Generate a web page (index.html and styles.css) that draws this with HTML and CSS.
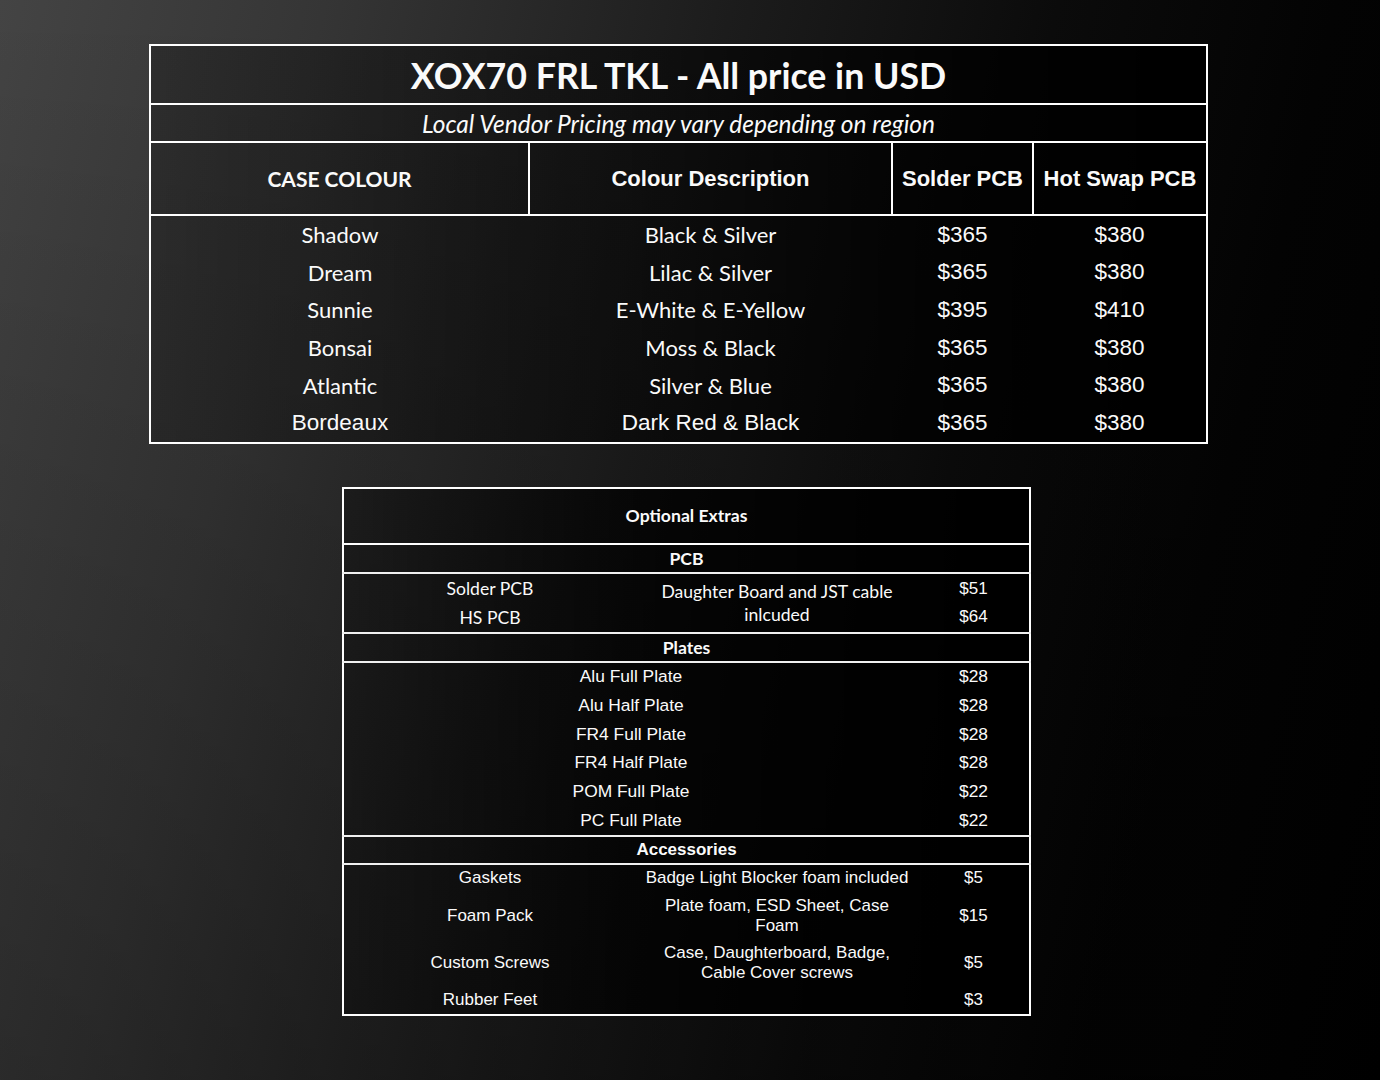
FILE: index.html
```html
<!DOCTYPE html>
<html lang="en">
<head>
<meta charset="utf-8">
<title>XOX70 FRL TKL Pricing</title>
<link rel="stylesheet" href="styles.css">
</head>
<body>
<table class="price">
  <colgroup>
    <col class="w1"><col class="w2"><col class="w3"><col class="w4">
  </colgroup>
  <tr class="title-row"><td colspan="4" class="title cal">XOX70 FRL TKL - All price in USD</td></tr>
  <tr class="sub-row"><td colspan="4" class="subtitle cal">Local Vendor Pricing may vary depending on region</td></tr>
  <tr class="head-row">
    <th class="cal">CASE COLOUR</th>
    <th class="ari">Colour Description</th>
    <th class="ari">Solder PCB</th>
    <th class="ari">Hot Swap PCB</th>
  </tr>
  <tr class="body-row"><td class="cal">Shadow</td><td class="cal">Black &amp; Silver</td><td class="ari">$365</td><td class="ari">$380</td></tr>
  <tr class="body-row"><td class="cal">Dream</td><td class="cal">Lilac &amp; Silver</td><td class="ari">$365</td><td class="ari">$380</td></tr>
  <tr class="body-row"><td class="cal">Sunnie</td><td class="cal">E-White &amp; E-Yellow</td><td class="ari">$395</td><td class="ari">$410</td></tr>
  <tr class="body-row"><td class="cal">Bonsai</td><td class="cal">Moss &amp; Black</td><td class="ari">$365</td><td class="ari">$380</td></tr>
  <tr class="body-row"><td class="cal">Atlantic</td><td class="cal">Silver &amp; Blue</td><td class="ari">$365</td><td class="ari">$380</td></tr>
  <tr class="body-row"><td class="ari">Bordeaux</td><td class="ari">Dark Red &amp; Black</td><td class="ari">$365</td><td class="ari">$380</td></tr>
</table>

<table class="extras">
  <colgroup>
    <col class="e1"><col class="e2"><col class="e3">
  </colgroup>
  <tr class="ex-title"><th colspan="3" class="cal">Optional Extras</th></tr>
  <tr class="sec"><th colspan="3" class="cal">PCB</th></tr>
  <tr class="pcb top"><td class="cal">Solder PCB</td><td rowspan="2" class="cal desc-pcb">Daughter Board and JST cable<br>inlcuded</td><td class="ari">$51</td></tr>
  <tr class="pcb bot"><td class="cal">HS PCB</td><td class="ari">$64</td></tr>
  <tr class="sec"><th colspan="3" class="cal">Plates</th></tr>
  <tr class="plate"><td colspan="2" class="ari">Alu Full Plate</td><td class="ari">$28</td></tr>
  <tr class="plate"><td colspan="2" class="ari">Alu Half Plate</td><td class="ari">$28</td></tr>
  <tr class="plate"><td colspan="2" class="ari">FR4 Full Plate</td><td class="ari">$28</td></tr>
  <tr class="plate"><td colspan="2" class="ari">FR4 Half Plate</td><td class="ari">$28</td></tr>
  <tr class="plate"><td colspan="2" class="ari">POM Full Plate</td><td class="ari">$22</td></tr>
  <tr class="plate"><td colspan="2" class="ari">PC Full Plate</td><td class="ari">$22</td></tr>
  <tr class="sec acc-head"><th colspan="3" class="ari">Accessories</th></tr>
  <tr class="acc short"><td class="ari">Gaskets</td><td class="ari">Badge Light Blocker foam included</td><td class="ari">$5</td></tr>
  <tr class="acc tall"><td class="ari">Foam Pack</td><td class="ari wrap">Plate foam, ESD Sheet, Case<br>Foam</td><td class="ari">$15</td></tr>
  <tr class="acc tall"><td class="ari">Custom Screws</td><td class="ari wrap">Case, Daughterboard, Badge,<br>Cable Cover screws</td><td class="ari">$5</td></tr>
  <tr class="acc short"><td class="ari">Rubber Feet</td><td class="ari"></td><td class="ari">$3</td></tr>
</table>
</body>
</html>
```

FILE: styles.css
```css
html, body {
  margin: 0;
  padding: 0;
}

body {
  width: 1380px;
  height: 1080px;
  overflow: hidden;
  color: #fafafa;
  background:
    linear-gradient(to bottom, rgba(0,0,0,0) 0%, rgba(0,0,0,0.25) 100%),
    linear-gradient(103deg, #444444 0%, #353535 20%, #1c1c1c 45%, #0b0b0b 65%, #030303 82%, #000000 100%);
  display: flex;
  flex-direction: column;
  align-items: flex-start;
}

.cal {
  font-family: "Lato", "Open Sans", sans-serif;
}

.ari {
  font-family: "Liberation Sans", Arial, sans-serif;
}

table {
  border-collapse: collapse;
  table-layout: fixed;
}

td, th {
  padding: 0;
  text-align: center;
  vertical-align: middle;
  white-space: nowrap;
}

/* ---------- Top price table ---------- */
.price {
  margin: 44px 0 0 149px;
  width: 1057px;
  border: 2px solid #ffffff;
  background: linear-gradient(to right, rgba(20,20,20,0.35) 0%, rgba(0,0,0,0.55) 50%, #000 100%);
}

.w1 { width: 379px; }
.w2 { width: 363px; }
.w3 { width: 141px; }
.w4 { width: 174px; }

.title-row td {
  height: 56px;
  border-bottom: 2px solid #ffffff;
  font-size: 35.7px;
  font-weight: 700;
  padding-top: 1px;
}

.sub-row td {
  height: 36px;
  border-bottom: 2px solid #ffffff;
  font-size: 24.5px;
  font-style: italic;
}

.head-row th {
  height: 71px;
  border-bottom: 2px solid #ffffff;
  border-right: 2px solid #ffffff;
  font-size: 22px;
  font-weight: 700;
}

.head-row th.cal {
  font-size: 21px;
}

.head-row th:last-child {
  border-right: none;
}

.body-row td {
  height: 37.6px;
  font-size: 22px;
}

.body-row td.ari {
  font-size: 22.5px;
}

/* ---------- Optional extras table ---------- */
.extras {
  margin: 43px 0 0 342px;
  width: 687px;
  border: 2px solid #ffffff;
  background: linear-gradient(to right, rgba(10,10,10,0.4) 0%, rgba(0,0,0,0.75) 45%, #000 100%);
  font-size: 17px;
}

.extras .cal {
  font-size: 17.6px;
}

.e1 { width: 293px; }
.e2 { width: 282px; }
.e3 { width: 112px; }

.extras th {
  font-weight: 700;
}

.ex-title th {
  height: 54px;
  border-bottom: 2px solid #ffffff;
}

.sec th {
  height: 27px;
  border-top: 2px solid #f0f0f0;
  border-bottom: 2px solid #f0f0f0;
}

.sec.acc-head th {
  height: 26px;
}

.sec th.ari {
  font-size: 17px;
}

.pcb td {
  height: 28.5px;
}

.pcb.top td {
  padding-top: 1px;
}

.desc-pcb {
  line-height: 23px;
}

.plate td {
  height: 28.7px;
  font-size: 17.4px;
}

.acc.short td {
  height: 27.5px;
}

.acc.tall td {
  height: 47px;
}

.wrap {
  line-height: 20px;
}
```
